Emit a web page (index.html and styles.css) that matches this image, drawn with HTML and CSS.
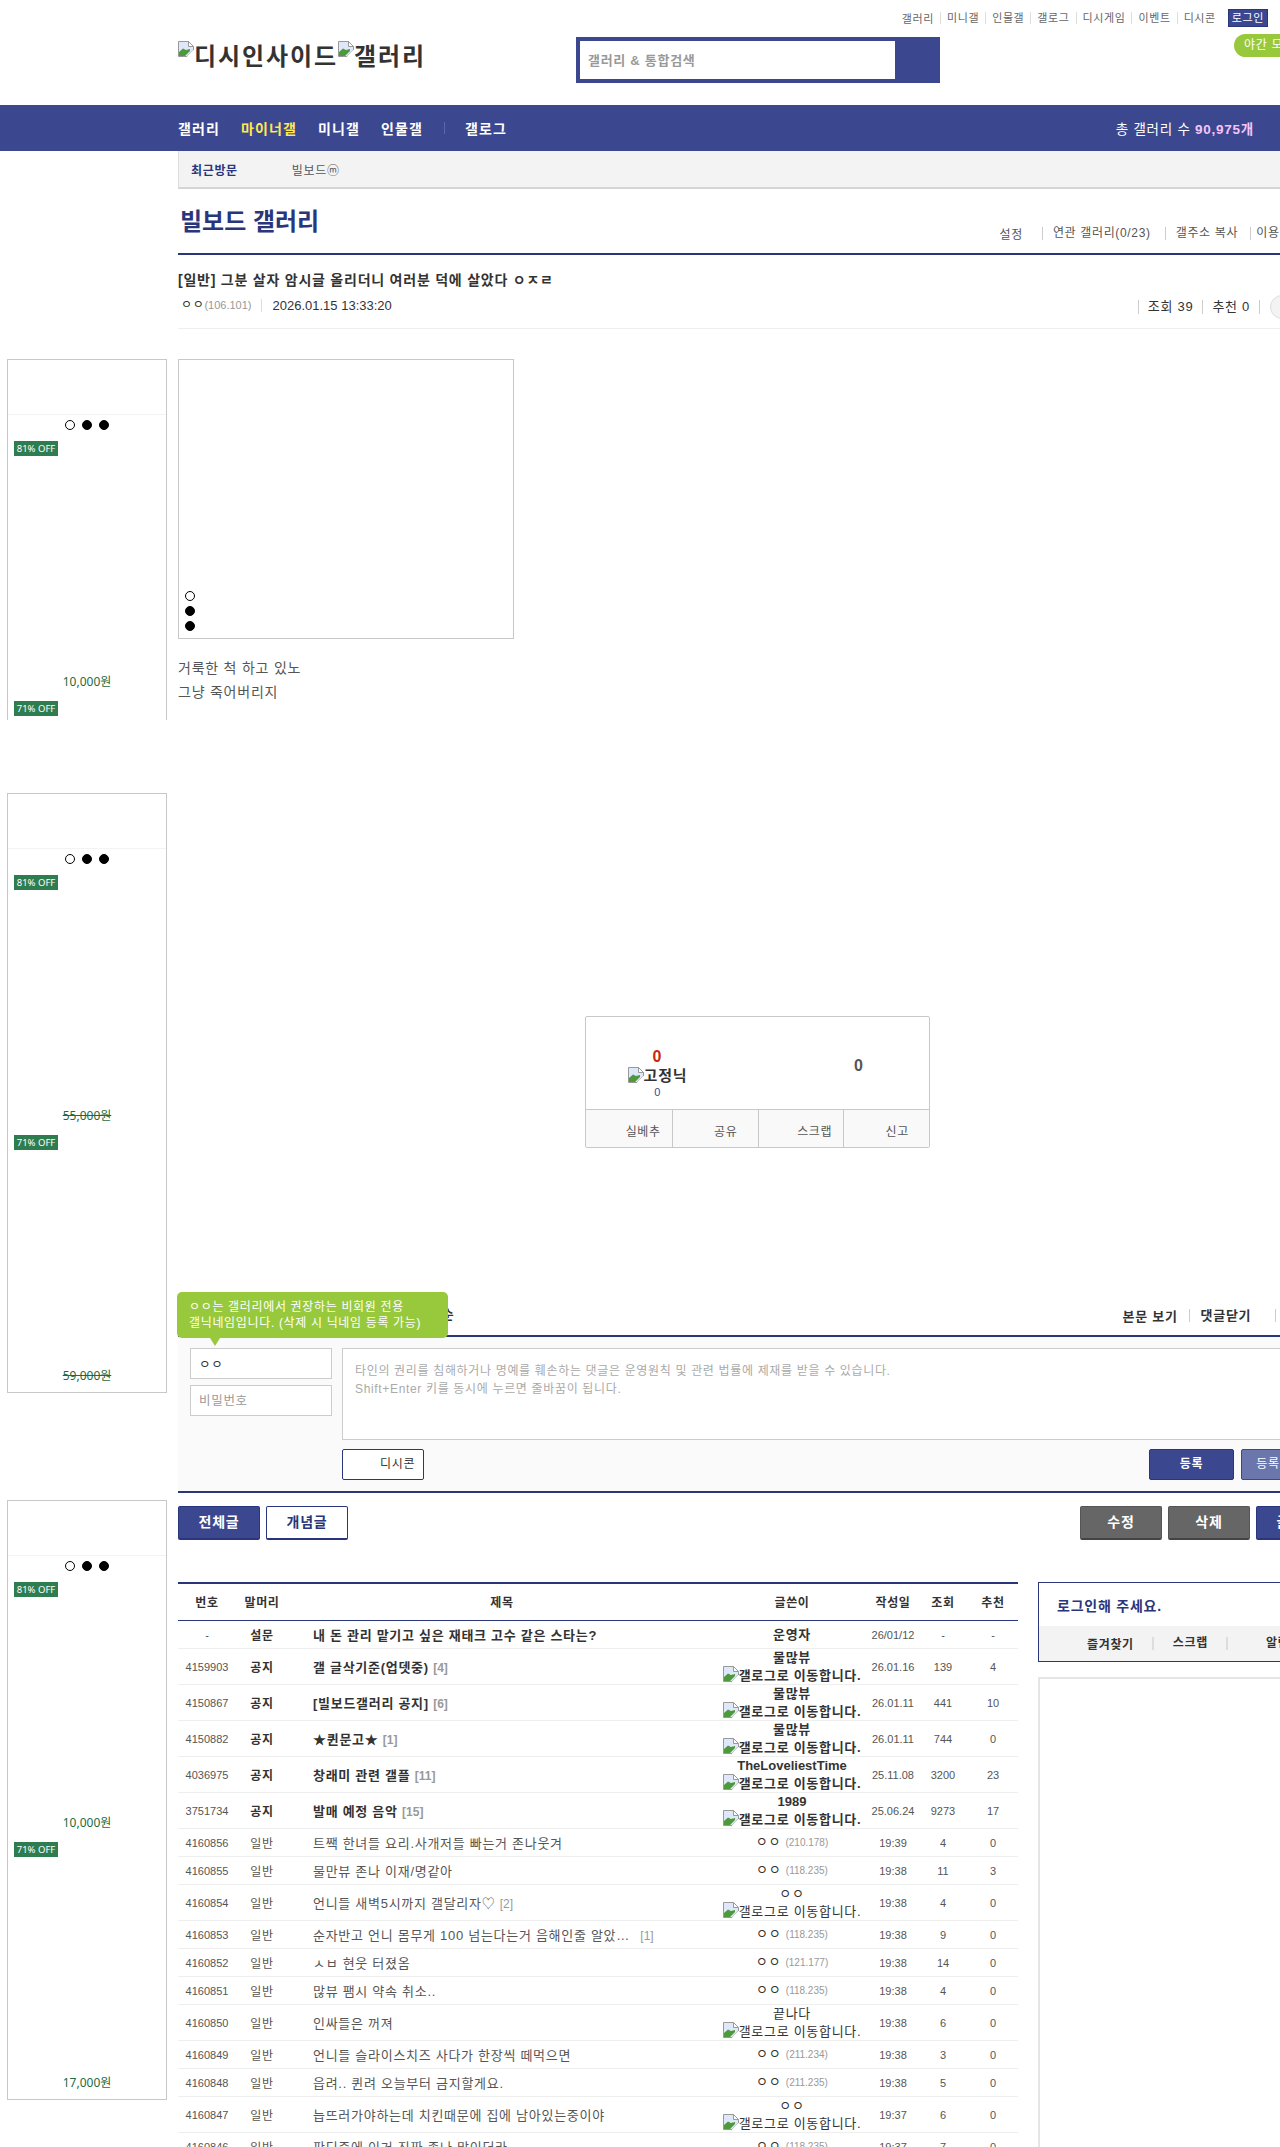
FILE: index.html
```html
<!DOCTYPE html>
<html lang="ko">
<head>
    <meta charset="UTF-8">
    <meta name="viewport" content="width=device-width, initial-scale=1.0">
    <title>빌보드 갤러리</title>
    <link rel="stylesheet" href="styles.css">
</head>
<body>
    <!-- broken image icon, reused everywhere -->
    <svg class="defs" width="0" height="0">
        <symbol id="broken" viewBox="0 0 16 16">
            <path d="M.5.5H10.5L15.5 5.5V9L9 15.5H.5Z" fill="#dfe8fb" stroke="#999"/>
            <path d="M10.5.5V5.5H15.5Z" fill="#fff" stroke="#999"/>
            <path d="M1 15V11L5 7.500L8 9L12 8V10L7 15Z" fill="#4c9a3a"/>
            <path d="M15.500 9L9 15.500H16V9Z" fill="#fff"/>
        </symbol>
    </svg>

    <header class="head">
        <div class="logo">
            <svg class="broken"><use href="#broken"/></svg>디시인사이드<svg class="broken"><use href="#broken"/></svg>갤러리
        </div>
        <div class="search">
            <input class="search-input" type="text" placeholder="갤러리 &amp; 통합검색">
        </div>
        <div class="head-right">
            <div class="top-links">
                <a>갤러리</a><a>미니갤</a><a>인물갤</a><a>갤로그</a><a>디시게임</a><a>이벤트</a><a>디시콘</a>
                <span class="login-btn">로그인</span>
            </div>
            <span class="night-btn">야간 모드</span>
        </div>
    </header>

    <nav class="gnb">
        <a>갤러리</a><a class="on">마이너갤</a><a>미니갤</a><a>인물갤</a><i class="gnb-sep"></i><a>갤로그</a>
        <span class="gnb-count">총 갤러리 수 <b>90,975개</b></span>
    </nav>

    <div class="page">
        <aside class="ads">
            <div class="ad ad-cut">
                <div class="ad-head"></div>
                <div class="dots"><i class="dot off"></i><i class="dot"></i><i class="dot"></i></div>
                <div class="ad-card"><span class="off-tag">81% OFF</span><span class="price">10,000원</span></div>
                <div class="ad-card"><span class="off-tag">71% OFF</span></div>
            </div>
            <div class="ad ad-second">
                <div class="ad-head"></div>
                <div class="dots"><i class="dot off"></i><i class="dot"></i><i class="dot"></i></div>
                <div class="ad-card"><span class="off-tag">81% OFF</span><s class="price">55,000원</s></div>
                <div class="ad-card"><span class="off-tag">71% OFF</span><s class="price">59,000원</s></div>
            </div>
            <div class="ad ad-third">
                <div class="ad-head"></div>
                <div class="dots"><i class="dot off"></i><i class="dot"></i><i class="dot"></i></div>
                <div class="ad-card"><span class="off-tag">81% OFF</span><span class="price">10,000원</span></div>
                <div class="ad-card"><span class="off-tag">71% OFF</span><span class="price">17,000원</span></div>
            </div>
        </aside>

        <main class="main">
            <div class="recent">
                <strong>최근방문</strong>
                <span>빌보드ⓜ</span>
            </div>

            <div class="gall-title">
                <h2>빌보드 갤러리</h2>
                <div class="gall-links">
                    <a>설정</a><a class="related">연관 갤러리(0/23)</a><a class="tight">갤주소 복사</a><a class="last">이용안내</a>
                </div>
            </div>

            <section class="post-head">
                <h3>[일반] 그분 살자 암시글 올리더니 여러분 덕에 살았다 ㅇㅈㄹ</h3>
                <div class="post-meta">
                    <span class="writer">ㅇㅇ<em>(106.101)</em></span>
                    <span class="date">2026.01.15 13:33:20</span>
                    <span class="counts"><span>조회 39</span><span>추천 0</span></span>
                </div>
            </section>
            <i class="round-btn"></i>

            <section class="post-body">
                <div class="slide-box">
                    <i class="dot off"></i><i class="dot"></i><i class="dot"></i>
                </div>
                <p>거룩한 척 하고 있노</p>
                <p>그냥 죽어버리지</p>

                <div class="reco">
                    <div class="reco-top">
                        <div class="reco-up">
                            <b class="red">0</b>
                            <span class="fix"><svg class="broken"><use href="#broken"/></svg>고정닉</span>
                            <span class="blue">0</span>
                        </div>
                        <b class="reco-down">0</b>
                    </div>
                    <div class="reco-btns">
                        <a>실베추</a><a>공유</a><a>스크랩</a><a>신고</a>
                    </div>
                </div>
            </section>

            <section class="cmt">
                <div class="cmt-head">
                    <b class="cmt-title">전체 댓글 0개 <span>등록순</span></b>
                    <div class="cmt-links"><a>본문 보기</a><a>댓글닫기</a><a class="far">새로고침</a></div>
                </div>
                <div class="cmt-tip">ㅇㅇ는 갤러리에서 권장하는 비회원 전용<br>갤닉네임입니다. (삭제 시 닉네임 등록 가능)</div>
                <div class="cmt-form">
                    <div class="cmt-user">
                        <input class="field nick" type="text" value="ㅇㅇ">
                        <input class="field" type="text" placeholder="비밀번호">
                    </div>
                    <div class="cmt-write">
                        <textarea class="cmt-text" placeholder="타인의 권리를 침해하거나 명예를 훼손하는 댓글은 운영원칙 및 관련 법률에 제재를 받을 수 있습니다.&#10;Shift+Enter 키를 동시에 누르면 줄바꿈이 됩니다."></textarea>
                        <div class="cmt-actions">
                            <a class="dccon">디시콘</a>
                            <a class="btn-blue">등록</a>
                            <a class="btn-blue light">등록+추천</a>
                        </div>
                    </div>
                </div>
            </section>

            <div class="list-tabs">
                <a class="tab tab-on">전체글</a>
                <a class="tab">개념글</a>
                <a class="tab tab-gray push">수정</a>
                <a class="tab tab-gray">삭제</a>
                <a class="tab tab-on">글쓰기</a>
            </div>

            <div class="list-wrap">
                <table class="list">
                    <colgroup>
                        <col class="c-num"><col class="c-sub"><col><col class="c-writer"><col class="c-date"><col class="c-count"><col class="c-count">
                    </colgroup>
                    <thead>
                        <tr><th>번호</th><th>말머리</th><th>제목</th><th>글쓴이</th><th>작성일</th><th>조회</th><th>추천</th></tr>
                    </thead>
                    <tbody>
                        <tr class="notice"><td>-</td><td class="sub">설문</td><td class="title">내 돈 관리 맡기고 싶은 재태크 고수 같은 스타는?</td><td class="who">운영자</td><td>26/01/12</td><td>-</td><td>-</td></tr>
                        <tr class="notice tall"><td>4159903</td><td class="sub">공지</td><td class="title">갤 글삭기준(업뎃중) <em>[4]</em></td><td class="who">물많뷰<span class="gallog"><svg class="broken"><use href="#broken"/></svg>갤로그로 이동합니다.</span></td><td>26.01.16</td><td>139</td><td>4</td></tr>
                        <tr class="notice tall"><td>4150867</td><td class="sub">공지</td><td class="title">[빌보드갤러리 공지] <em>[6]</em></td><td class="who">물많뷰<span class="gallog"><svg class="broken"><use href="#broken"/></svg>갤로그로 이동합니다.</span></td><td>26.01.11</td><td>441</td><td>10</td></tr>
                        <tr class="notice tall"><td>4150882</td><td class="sub">공지</td><td class="title">★퀸문고★ <em>[1]</em></td><td class="who">물많뷰<span class="gallog"><svg class="broken"><use href="#broken"/></svg>갤로그로 이동합니다.</span></td><td>26.01.11</td><td>744</td><td>0</td></tr>
                        <tr class="notice tall"><td>4036975</td><td class="sub">공지</td><td class="title">창래미 관련 갤플 <em>[11]</em></td><td class="who"><span class="latin">TheLoveliestTime</span><span class="gallog"><svg class="broken"><use href="#broken"/></svg>갤로그로 이동합니다.</span></td><td>25.11.08</td><td>3200</td><td>23</td></tr>
                        <tr class="notice tall"><td>3751734</td><td class="sub">공지</td><td class="title">발매 예정 음악 <em>[15]</em></td><td class="who"><span class="latin">1989</span><span class="gallog"><svg class="broken"><use href="#broken"/></svg>갤로그로 이동합니다.</span></td><td>25.06.24</td><td>9273</td><td>17</td></tr>
                        <tr><td>4160856</td><td class="sub">일반</td><td class="title">트짹 한녀들 요리.사개저들 빠는거 존나웃겨</td><td class="who">ㅇㅇ <em>(210.178)</em></td><td>19:39</td><td>4</td><td>0</td></tr>
                        <tr><td>4160855</td><td class="sub">일반</td><td class="title">물만뷰 존나 이재/명같아</td><td class="who">ㅇㅇ <em>(118.235)</em></td><td>19:38</td><td>11</td><td>3</td></tr>
                        <tr class="tall"><td>4160854</td><td class="sub">일반</td><td class="title">언니들 새벽5시까지 갤달리자♡ <em>[2]</em></td><td class="who">ㅇㅇ<span class="gallog"><svg class="broken"><use href="#broken"/></svg>갤로그로 이동합니다.</span></td><td>19:38</td><td>4</td><td>0</td></tr>
                        <tr><td>4160853</td><td class="sub">일반</td><td class="title">순자반고 언니 몸무게 100 넘는다는거 음해인줄 알았… <em class="gap">[1]</em></td><td class="who">ㅇㅇ <em>(118.235)</em></td><td>19:38</td><td>9</td><td>0</td></tr>
                        <tr><td>4160852</td><td class="sub">일반</td><td class="title">ㅅㅂ 현웃 터졌옴</td><td class="who">ㅇㅇ <em>(121.177)</em></td><td>19:38</td><td>14</td><td>0</td></tr>
                        <tr><td>4160851</td><td class="sub">일반</td><td class="title">많뷰 팸시 약속 취소..</td><td class="who">ㅇㅇ <em>(118.235)</em></td><td>19:38</td><td>4</td><td>0</td></tr>
                        <tr class="tall"><td>4160850</td><td class="sub">일반</td><td class="title">인싸들은 꺼져</td><td class="who">끝나다<span class="gallog"><svg class="broken"><use href="#broken"/></svg>갤로그로 이동합니다.</span></td><td>19:38</td><td>6</td><td>0</td></tr>
                        <tr><td>4160849</td><td class="sub">일반</td><td class="title">언니들 슬라이스치즈 사다가 한장씩 떼먹으면</td><td class="who">ㅇㅇ <em>(211.234)</em></td><td>19:38</td><td>3</td><td>0</td></tr>
                        <tr><td>4160848</td><td class="sub">일반</td><td class="title">읍려.. 퀸려 오늘부터 금지할게요.</td><td class="who">ㅇㅇ <em>(211.235)</em></td><td>19:38</td><td>5</td><td>0</td></tr>
                        <tr class="tall"><td>4160847</td><td class="sub">일반</td><td class="title">늡뜨러가야하는데 치킨때문에 집에 남아있는중이야</td><td class="who">ㅇㅇ<span class="gallog"><svg class="broken"><use href="#broken"/></svg>갤로그로 이동합니다.</span></td><td>19:37</td><td>6</td><td>0</td></tr>
                        <tr><td>4160846</td><td class="sub">일반</td><td class="title">판디중에 이거 진짜 좆나 많이더라</td><td class="who">ㅇㅇ <em>(118.235)</em></td><td>19:37</td><td>7</td><td>0</td></tr>
                    </tbody>
                </table>

                <aside class="side">
                    <div class="login-box">
                        <strong>로그인해 주세요.</strong>
                        <div class="login-links"><a>즐겨찾기</a><a>스크랩</a><a class="last">알림</a></div>
                    </div>
                    <div class="side-ad"></div>
                </aside>
            </div>
        </main>
    </div>
</body>
</html>
```

FILE: styles.css
```css
html, body {
    margin: 0;
    height: 2147px;
    overflow: hidden;
}

body {
    width: 1280px;
    background: #fff;
    color: #333;
    font-family: "Liberation Sans", "Noto Sans CJK KR", sans-serif;
    font-size: 12px;
}

/* hangul in the original runs a little wider than the installed font */
body * {
    letter-spacing: .055em;
}

.defs {
    display: block;
}

.broken {
    width: 16px;
    height: 16px;
    vertical-align: -2px;
}

/* header */
.head {
    display: flex;
    width: 1338px;
    height: 105px;
    padding-left: 178px;
    box-sizing: border-box;
}

.logo {
    flex: 0 0 398px;
    padding-top: 40px;
    font-size: 24px;
    font-weight: bold;
    letter-spacing: .08em;
    line-height: 34px;
    color: #333;
    white-space: nowrap;
}

.logo .broken {
    vertical-align: 8px;
}

.search {
    flex: 0 0 364px;
    height: 46px;
    margin-top: 37px;
    padding: 4px 45px 4px 4px;
    box-sizing: border-box;
    background: #3b4890;
}

.search-input {
    display: block;
    width: 100%;
    height: 100%;
    padding: 2px 8px;
    box-sizing: border-box;
    border: 0;
    font: bold 13px "Liberation Sans", "Noto Sans CJK KR", sans-serif;
}

.search-input::placeholder {
    color: #999;
}

.head-right {
    display: flex;
    flex: 0 0 398px;
    flex-direction: column;
    align-items: flex-end;
    min-width: 0;
}

.top-links {
    display: flex;
    flex: none;
    align-items: center;
    height: 18px;
    margin: 9px 70px 0 0;
    font-size: 11px;
    color: #666;
    white-space: nowrap;
}

.top-links a + a {
    margin-left: 6px;
    padding-left: 6px;
    border-left: 1px solid #ddd;
    line-height: 12px;
}

.login-btn {
    margin-left: 12px;
    padding: 0 3px;
    border: 1px solid #29367c;
    background: #3b4890;
    color: #fff;
    line-height: 16px;
}

.night-btn {
    width: 104px;
    height: 23px;
    margin-top: 7px;
    padding-left: 10px;
    box-sizing: border-box;
    border-radius: 12px 0 0 12px;
    background: #98c93c;
    color: #fff;
    line-height: 23px;
    white-space: nowrap;
}

/* main nav */
.gnb {
    display: flex;
    align-items: center;
    height: 46px;
    padding: 0 26px 0 178px;
    background: #3b4890;
    color: #fff;
    font-size: 14px;
    font-weight: bold;
}

.gnb a {
    margin-right: 21px;
    letter-spacing: .08em;
}

.gnb .on {
    color: #ffe94f;
}

.gnb-sep {
    width: 1px;
    height: 12px;
    margin-right: 20px;
    background: #5c68ab;
}

.gnb-count {
    margin-left: auto;
    font-size: 13.5px;
    font-weight: normal;
}

.gnb-count b {
    color: #f6c4f8;
}

/* page columns */
.page {
    display: flex;
    align-items: flex-start;
}

.ads {
    flex: 0 0 160px;
    margin: 208px 11px 0 7px;
}

.ad {
    height: 600px;
    box-sizing: border-box;
    border: 1px solid #c8c8c8;
    overflow: hidden;
    font-family: "Noto Sans", "Noto Sans CJK KR", sans-serif;
}

.ad-cut {
    height: 361px;
    border-bottom: 0;
}

.ad-second {
    margin-top: 73px;
}

.ad-third {
    margin-top: 107px;
}

.ad-head {
    height: 54px;
    border-bottom: 1px solid #f3f3f3;
}

.dots {
    display: flex;
    justify-content: center;
    align-items: center;
    gap: 7px;
    height: 19px;
}

.dot {
    display: block;
    width: 8px;
    height: 8px;
    border: 1px solid #000;
    border-radius: 50%;
    background: #000;
}

.dot.off {
    background: #fff;
}

.ad-card {
    display: flex;
    flex-direction: column;
    justify-content: space-between;
    height: 260px;
    padding-bottom: 10px;
    box-sizing: border-box;
}

.dots + .ad-card {
    margin-top: 7px;
}

.off-tag {
    align-self: flex-start;
    width: 44px;
    height: 15px;
    margin-left: 6px;
    background: #2e7d50;
    color: #fff;
    font-size: 9.5px;
    letter-spacing: 0;
    line-height: 15px;
    text-align: center;
    white-space: nowrap;
}

.price {
    align-self: center;
    color: #1f6b40;
    font-size: 12px;
    letter-spacing: 0;
    line-height: 18px;
}

.main {
    flex: 0 0 1160px;
    position: relative;
}

.recent {
    display: flex;
    align-items: center;
    gap: 54px;
    height: 38px;
    padding-left: 12px;
    box-sizing: border-box;
    border-left: 1px solid #ddd;
    border-bottom: 2px solid #d5d5d5;
    background: #f3f3f3;
    font-size: 12px;
    color: #555;
}

.recent strong {
    color: #29367c;
}

/* gallery title */
.gall-title {
    display: flex;
    justify-content: space-between;
    height: 64px;
    border-bottom: 2px solid #29367c;
}

.gall-title h2 {
    margin: 15px 0 0 2px;
    color: #29367c;
    font-size: 24px;
    letter-spacing: 0;
    line-height: 36px;
    white-space: nowrap;
}

.gall-links {
    display: flex;
    align-items: center;
    height: 16px;
    margin: 36px 35px 0 0;
    white-space: nowrap;
    color: #555;
}

.gall-links a {
    margin-right: 19px;
}

.gall-links a + a {
    padding-left: 10px;
    border-left: 1px solid #ccc;
    line-height: 13px;
}

.gall-links .related {
    margin-right: 14px;
}

.gall-links .tight {
    margin-right: 12px;
}

.gall-links .last {
    margin-right: 0;
    padding-left: 5px;
}

/* post header */
.post-head {
    height: 74px;
    box-sizing: border-box;
    border-bottom: 1px solid #eee;
}

.post-head h3 {
    margin: 0;
    padding-top: 15px;
    font-size: 14px;
    line-height: 20px;
}

.post-meta {
    display: flex;
    align-items: center;
    height: 18px;
    margin-top: 6px;
    padding: 0 78px 0 3px;
    font-size: 13px;
}

.writer {
    padding-right: 9px;
    border-right: 1px solid #ddd;
    line-height: 13px;
    font-size: 12px;
}

.writer em {
    color: #999;
    font-size: 11px;
    font-style: normal;
    letter-spacing: 0;
}

.date {
    margin-left: 11px;
    letter-spacing: 0;
}

.counts {
    display: flex;
    margin: 4px 0 0 auto;
    border-right: 1px solid #ccc;
    white-space: nowrap;
}

.counts span {
    padding: 0 9px;
    border-left: 1px solid #ccc;
    line-height: 14px;
}

.round-btn {
    position: absolute;
    top: 144px;
    left: 1092px;
    width: 24px;
    height: 24px;
    box-sizing: border-box;
    border: 1px solid #ddd;
    border-radius: 50%;
    background: #f3f3f3;
}

/* post content */
.post-body {
    padding-top: 30px;
    font-size: 14px;
    color: #555;
}

.slide-box {
    display: flex;
    flex-direction: column;
    justify-content: flex-end;
    gap: 5px;
    width: 336px;
    height: 280px;
    padding: 0 0 7px 6px;
    box-sizing: border-box;
    border: 1px solid #c8c8c8;
}

.post-body p {
    margin: 0;
    line-height: 24px;
}

.post-body .slide-box + p {
    margin-top: 17px;
}

.reco {
    width: 345px;
    height: 132px;
    margin: 312px 0 0 407px;
    box-sizing: border-box;
    border: 1px solid #c8c8c8;
    border-radius: 2px;
}

.reco-top {
    display: flex;
    height: 93px;
    box-sizing: border-box;
    border-bottom: 1px solid #c8c8c8;
}

.reco-up {
    display: flex;
    flex-direction: column;
    align-items: center;
    width: 143px;
    padding-top: 31px;
    box-sizing: border-box;
    color: #333;
}

.red {
    color: #c8290e;
    font-size: 16px;
    line-height: 18px;
}

.fix {
    font-size: 15px;
    font-weight: bold;
    line-height: 20px;
    white-space: nowrap;
}

.blue {
    color: #3b4890;
    font-size: 11px;
    line-height: 13px;
}

.reco-down {
    margin: 39px 0 0 125px;
    font-size: 16px;
    line-height: 20px;
}

.reco-btns {
    display: flex;
    height: 37px;
    background: #f9f9f9;
    font-size: 12px;
    color: #555;
}

.reco-btns a {
    flex: 0 0 25%;
    padding: 12px 11px 0 0;
    box-sizing: border-box;
    text-align: right;
}

.reco-btns a:nth-child(even) {
    padding-right: 20px;
}

.reco-btns a + a {
    border-left: 1px solid #c8c8c8;
}

/* comments */
.cmt {
    position: relative;
    margin-top: 152px;
}

.cmt-head {
    display: flex;
    justify-content: space-between;
    height: 35px;
    border-bottom: 2px solid #29367c;
    font-size: 13px;
}

.cmt-title {
    font-size: 13px;
    line-height: 30px;
    white-space: nowrap;
}

.cmt-title span {
    margin-left: 154px;
}

.cmt-links {
    display: flex;
    align-items: center;
    height: 30px;
    font-weight: bold;
    white-space: nowrap;
}

.cmt-links a + a {
    margin-left: 11px;
    padding-left: 11px;
    border-left: 1px solid #ccc;
    line-height: 13px;
}

.cmt-links .far {
    margin-left: 24px;
}

.cmt-tip {
    position: absolute;
    top: -8px;
    left: -1px;
    width: 271px;
    height: 46px;
    padding: 7px 0 0 12px;
    box-sizing: border-box;
    border-radius: 5px;
    background: #98c93c;
    color: #fff;
    font-size: 12px;
    line-height: 16px;
    white-space: nowrap;
}

.cmt-tip::after {
    content: "";
    position: absolute;
    left: 33px;
    bottom: -8px;
    border: 5px solid transparent;
    border-top: 8px solid #98c93c;
    border-bottom: 0;
}

.cmt-form {
    display: flex;
    gap: 10px;
    height: 156px;
    padding: 11px 12px;
    box-sizing: border-box;
    border-bottom: 2px solid #29367c;
    background: #fafafa;
}

.cmt-user {
    display: flex;
    flex-direction: column;
    gap: 6px;
    width: 142px;
}

.field {
    width: 100%;
    height: 31px;
    padding: 0 8px;
    box-sizing: border-box;
    border: 1px solid #ccc;
    background: #fff;
    font: 12.5px "Liberation Sans", "Noto Sans CJK KR", sans-serif;
    color: #333;
}

.field::placeholder {
    color: #999;
}

.cmt-write {
    flex: 1;
}

.cmt-text {
    display: block;
    width: 100%;
    height: 92px;
    padding: 13px 12px;
    box-sizing: border-box;
    border: 1px solid #ccc;
    background: #fff;
    resize: none;
    font: 12px/18px "Liberation Sans", "Noto Sans CJK KR", sans-serif;
}

.cmt-text::placeholder {
    color: #aaa;
}

.cmt-actions {
    display: flex;
    gap: 7px;
    margin-top: 9px;
}

.dccon {
    width: 82px;
    height: 31px;
    padding-left: 37px;
    box-sizing: border-box;
    border: 1px solid #29367c;
    border-radius: 2px;
    background: #fff;
    line-height: 29px;
    white-space: nowrap;
}

.btn-blue {
    width: 85px;
    height: 31px;
    box-sizing: border-box;
    border: 1px solid #29367c;
    border-radius: 2px;
    background: #3b4890;
    color: #fff;
    font-weight: bold;
    line-height: 29px;
    text-align: center;
}

.cmt-actions .dccon + .btn-blue {
    margin-left: auto;
}

.btn-blue.light {
    border-color: #3b4890;
    background: #6b76ad;
    font-weight: normal;
}

/* list tabs */
.list-tabs {
    display: flex;
    gap: 6px;
    margin-top: 13px;
}

.tab {
    width: 82px;
    height: 34px;
    box-sizing: border-box;
    border: 1px solid #29367c;
    border-bottom-width: 2px;
    border-radius: 2px;
    background: #fff;
    color: #29367c;
    font-size: 14px;
    font-weight: bold;
    line-height: 31px;
    text-align: center;
}

.tab-on {
    background: #3b4890;
    color: #fff;
}

.tab-gray {
    border-color: #555 #555 #444;
    background: #666;
    color: #fff;
}

.push {
    margin-left: auto;
}

/* post list */
.list-wrap {
    display: flex;
    align-items: flex-start;
    gap: 20px;
    margin-top: 42px;
}

.list {
    flex: 0 0 840px;
    width: 840px;
    table-layout: fixed;
    border-collapse: collapse;
    border-top: 2px solid #29367c;
    font-size: 11px;
    color: #555;
    text-align: center;
}

.c-num { width: 58px; }
.c-sub { width: 52px; }
.c-writer { width: 152px; }
.c-date { width: 50px; }
.c-count { width: 50px; }

.list th {
    height: 34px;
    padding: 0 0 2px;
    border-bottom: 1px solid #29367c;
    color: #333;
    font-size: 12px;
}

.list td {
    height: 27px;
    padding: 0;
    border-bottom: 1px solid #eee;
    letter-spacing: 0;
}

.list .tall td {
    height: 35px;
}

.list td.sub {
    font-size: 12px;
    letter-spacing: .055em;
}

.list td.title {
    padding-left: 25px;
    font-size: 13px;
    letter-spacing: .055em;
    text-align: left;
    white-space: nowrap;
}

.title em {
    color: #999;
    font-size: 12px;
    font-style: normal;
    letter-spacing: 0;
}

.title em.gap {
    margin-left: 6px;
}

.list td.who {
    color: #333;
    font-size: 13px;
    letter-spacing: .055em;
    line-height: 16px;
    white-space: nowrap;
}

.who em {
    color: #999;
    font-size: 10px;
    font-style: normal;
    letter-spacing: 0;
}

.who .latin {
    letter-spacing: 0;
}

.gallog {
    display: block;
    font-size: 13px;
    line-height: 16px;
}

.notice td.sub,
.notice td.title,
.list .notice td.who {
    color: #333;
    font-weight: bold;
}

/* right side */
.side {
    flex: 0 0 300px;
}

.login-box {
    height: 80px;
    box-sizing: border-box;
    border: 1px solid #29367c;
}

.login-box strong {
    display: block;
    height: 43px;
    padding-left: 18px;
    color: #29367c;
    font-size: 14px;
    line-height: 46px;
}

.login-links {
    display: flex;
    align-items: center;
    height: 35px;
    padding-left: 48px;
    background: #f3f3f3;
    font-size: 12px;
    font-weight: bold;
}

.login-links a + a {
    margin-left: 18px;
    padding-left: 19px;
    border-left: 2px solid #ddd;
    line-height: 13px;
}

.login-links .last {
    padding-left: 38px;
}

.side-ad {
    height: 500px;
    margin-top: 15px;
    border: 2px solid #e5e5e5;
}
```
